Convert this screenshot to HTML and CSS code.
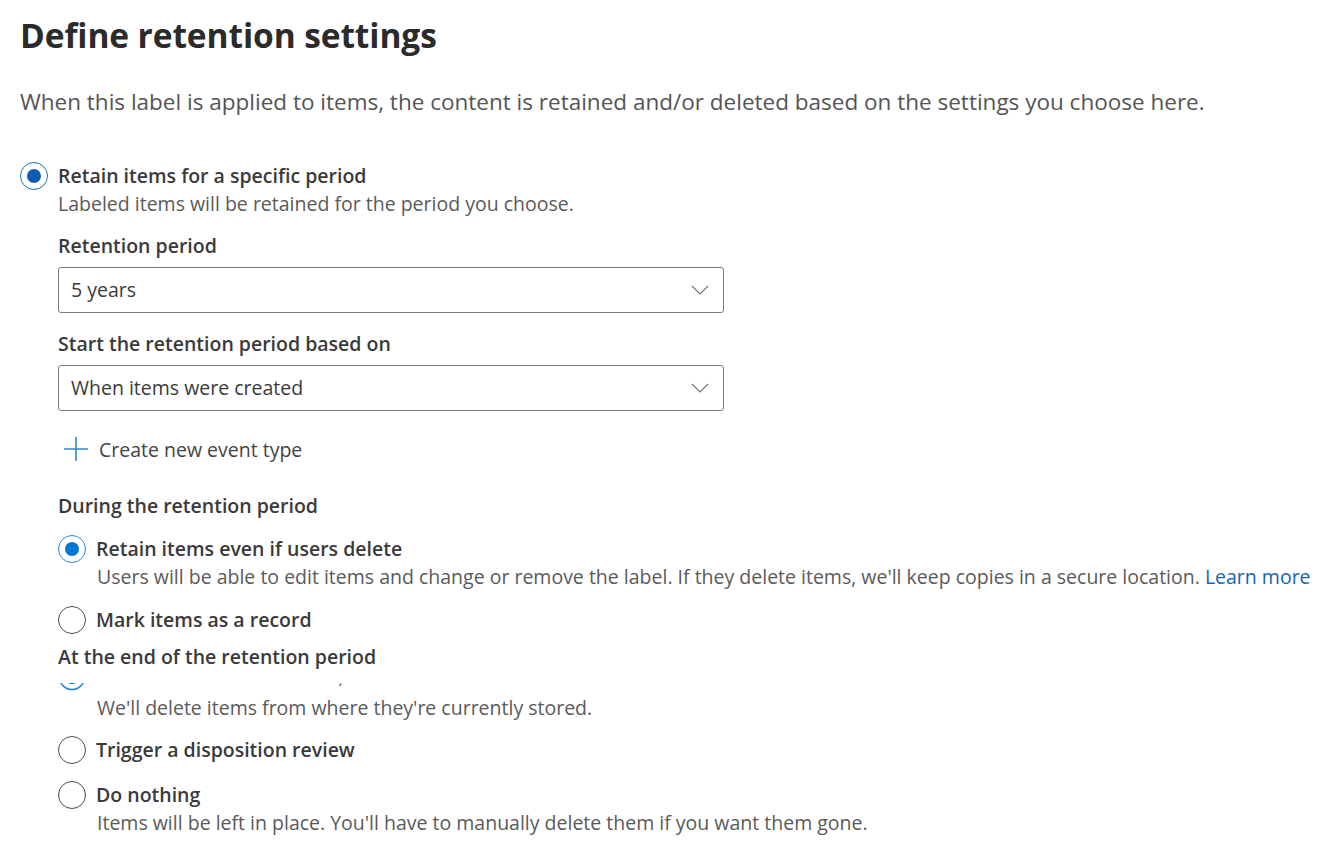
FILE: index.html
```html
<!DOCTYPE html>
<html lang="en">
<head>
<meta charset="utf-8">
<title>Define retention settings</title>
<link rel="stylesheet" href="styles.css">
</head>
<body>
<main class="page">
  <h1 class="title">Define retention settings</h1>
  <p class="intro">When this label is applied to items, the content is retained and/or deleted based on the settings you choose here.</p>

  <div class="choice top-choice">
    <span class="radio checked dark"></span>
    <span class="choice-label">Retain items for a specific period</span>
  </div>
  <div class="nested">
    <p class="desc">Labeled items will be retained for the period you choose.</p>

    <div class="field-label first-field">Retention period</div>
    <div class="dropdown">
      <span class="dropdown-value">5 years</span>
      <svg class="chevron" width="18" height="10" viewBox="0 0 18 10"><path d="M1 1 L9 9 L17 1" fill="none" stroke="#777777" stroke-width="1.2"/></svg>
    </div>

    <div class="field-label second-field">Start the retention period based on</div>
    <div class="dropdown">
      <span class="dropdown-value">When items were created</span>
      <svg class="chevron" width="18" height="10" viewBox="0 0 18 10"><path d="M1 1 L9 9 L17 1" fill="none" stroke="#777777" stroke-width="1.2"/></svg>
    </div>

    <div class="action">
      <svg class="plus" width="26" height="26" viewBox="0 0 26 26"><path d="M13 1 V25 M1 13 H25" fill="none" stroke="#2b88d8" stroke-width="1.6"/></svg>
      <span class="action-text">Create new event type</span>
    </div>

    <div class="field-label section-during">During the retention period</div>
    <div class="choice group-first">
      <span class="radio checked"></span>
      <span class="choice-label">Retain items even if users delete</span>
    </div>
    <p class="desc sub">Users will be able to edit items and change or remove the label. If they delete items, we'll keep copies in a secure location. <a class="link" href="#">Learn more</a></p>
    <div class="choice group-next">
      <span class="radio"></span>
      <span class="choice-label">Mark items as a record</span>
    </div>

    <div class="field-label section-end">At the end of the retention period</div>
    <svg class="clipped-row" width="300" height="10" viewBox="0 0 300 10" aria-hidden="true">
      <circle cx="14" cy="-6" r="12.5" fill="none" stroke="#2b88d8" stroke-width="1.6"/>
      <circle cx="14" cy="-6" r="7" fill="#0078d4"/>
      <path d="M283 0.5 L281.5 3" fill="none" stroke="#555" stroke-width="1.3"/>
    </svg>
    <p class="desc sub after-clip">We'll delete items from where they're currently stored.</p>
    <div class="choice group-next2">
      <span class="radio"></span>
      <span class="choice-label">Trigger a disposition review</span>
    </div>
    <div class="choice group-next3">
      <span class="radio"></span>
      <span class="choice-label">Do nothing</span>
    </div>
    <p class="desc sub">Items will be left in place. You'll have to manually delete them if you want them gone.</p>
  </div>
</main>
</body>
</html>
```

FILE: styles.css
```css
html, body {
  margin: 0;
  padding: 0;
  background: #ffffff;
}

.page {
  font-family: "Open Sans", "Noto Sans", "Liberation Sans", sans-serif;
  color: #323130;
  padding: 15px 0 0 20px;
  font-size: 19.5px;
}

.title {
  margin: 0;
  font-size: 33.5px;
  line-height: 40px;
  font-weight: 700;
  color: #2b2b2b;
  letter-spacing: -0.1px;
}

.intro {
  margin: 32px 0 0 0;
  line-height: 30px;
  color: #555555;
  font-size: 22.5px;
  white-space: nowrap;
}

.choice {
  display: flex;
  align-items: center;
  height: 28px;
  gap: 10px;
}

.top-choice {
  margin-top: 45px;
}

.radio {
  box-sizing: border-box;
  width: 28px;
  height: 28px;
  flex: 0 0 28px;
  border-radius: 50%;
  border: 1.6px solid #4a4a4a;
  display: flex;
  align-items: center;
  justify-content: center;
  background: #fff;
}

.radio.checked {
  border-color: #2b88d8;
}

.radio.checked::after {
  content: "";
  width: 14px;
  height: 14px;
  border-radius: 50%;
  background: #0078d4;
}

.radio.checked.dark::after {
  background: #0f5bb0;
}

.radio.checked.dark {
  border-color: #1a6fc4;
}

.choice-label {
  font-weight: 600;
  color: #3a3a3a;
  line-height: 28px;
  white-space: nowrap;
}

.nested {
  padding-left: 38px;
}

.desc {
  margin: 0;
  line-height: 28px;
  color: #5a5a5a;
  white-space: nowrap;
}

.desc.sub {
  padding-left: 39px;
}

.field-label {
  font-weight: 600;
  line-height: 28px;
  color: #3a3a3a;
}

.first-field {
  margin-top: 14px;
}

.second-field {
  margin-top: 17px;
}

.dropdown {
  box-sizing: border-box;
  margin-top: 7px;
  width: 666px;
  height: 46px;
  border: 1.5px solid #7a7a7a;
  border-radius: 3px;
  display: flex;
  align-items: center;
  justify-content: space-between;
  padding: 0 14px 0 12px;
}

.dropdown-value {
  color: #3a3a3a;
  line-height: 28px;
}

.chevron {
  display: block;
}

.action {
  margin-top: 24px;
  display: flex;
  align-items: center;
  gap: 10px;
  padding-left: 5px;
  height: 28px;
}

.plus {
  display: block;
}

.action-text {
  color: #444444;
}

.section-during {
  margin-top: 29px;
}

.group-first {
  margin-top: 15px;
}

.group-next {
  margin-top: 15px;
}

.section-end {
  margin-top: 9px;
}

.clipped-row {
  display: block;
  margin-top: 12px;
}

.after-clip {
  margin-top: 1px;
}

.group-next2 {
  margin-top: 14px;
}

.group-next3 {
  margin-top: 17px;
}

.link {
  color: #1a63b0;
  text-decoration: none;
}
```
